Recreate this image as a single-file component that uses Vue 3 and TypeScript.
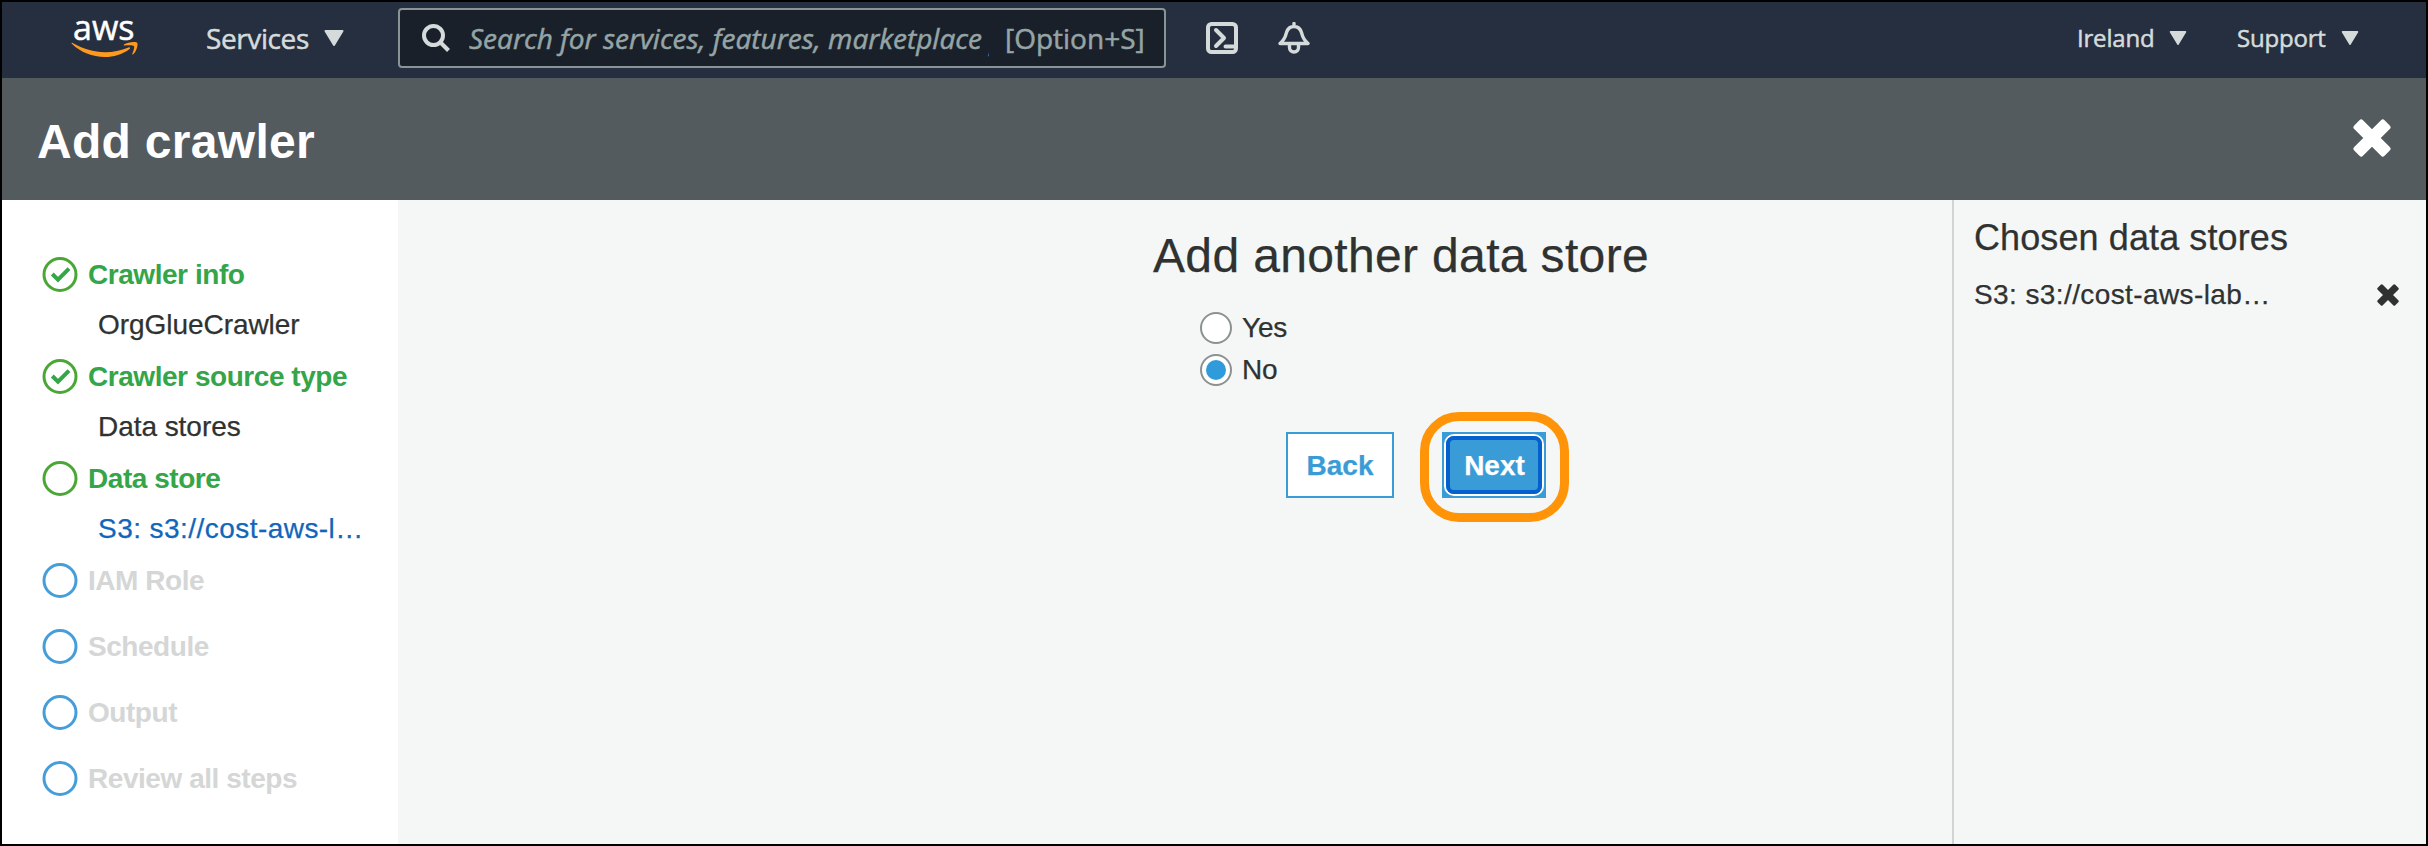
<script setup lang="ts">
import { ref } from 'vue'

interface Step {
  title: string
  state: 'done' | 'current' | 'todo'
  detail?: string
  link?: boolean
}

const steps: Step[] = [
  { title: 'Crawler info', state: 'done', detail: 'OrgGlueCrawler' },
  { title: 'Crawler source type', state: 'done', detail: 'Data stores' },
  { title: 'Data store', state: 'current', detail: 'S3: s3://cost-aws-l…', link: true },
  { title: 'IAM Role', state: 'todo' },
  { title: 'Schedule', state: 'todo' },
  { title: 'Output', state: 'todo' },
  { title: 'Review all steps', state: 'todo' },
]

const crossPath =
  'M19 13.800L29.800 3 35 8.200 24.200 19 35 29.800 29.800 35 19 24.200 8.200 35 3 29.800 13.800 19 3 8.200 8.200 3z'

const options = ['Yes', 'No']
const answer = ref('No')
</script>

<template>
  <div class="window">
    <nav class="nav">
      <div class="logo">
        <span class="logo-text">aws</span>
        <svg class="smile" width="68" height="18" viewBox="0 0 68 18">
          <path fill="#ff9a1f" d="M.6 1.6C.2 1 1 .6 1.6 1 12 7 23 10.200 34 10.200 42 10.200 50 8.600 57.500 5.400 58.800 4.900 59.800 6.200 58.600 7 51.500 12.500 42.500 15 34 15 21.500 15 9.500 10.500.6 1.600z" />
          <path fill="#ff9a1f" d="M53 2.500C56.500.1 65 -.8 66.200.8 67.300 2.400 65.800 9.200 62.200 12.300 61.600 12.800 61 12.500 61.300 11.800 62.200 9.800 63.800 5.200 63 4.200 62 3 57 3.300 53.700 3.600 52.700 3.700 52.500 2.900 53 2.500z" />
        </svg>
      </div>
      <div class="menu services">
        <span>Services</span>
        <svg width="20" height="16" viewBox="0 0 20 16"><path d="M1.500 1h17L10 15z" /></svg>
      </div>
      <div class="search">
        <svg class="lens" width="28" height="28" viewBox="0 0 28 28">
          <circle cx="11.500" cy="11.500" r="9.500" />
          <path d="M18.500 18.500l8 8" />
        </svg>
        <span class="placeholder">Search for services, features, marketplace p</span>
        <span class="shortcut">[Option+S]</span>
      </div>
      <svg class="nav-icon shell" width="32" height="32" viewBox="0 0 32 32">
        <rect x="2" y="2" width="28" height="28" rx="3.500" />
        <path d="M10 8l8 8-8 8M19.500 24.500h10" />
      </svg>
      <svg class="nav-icon bell" width="32" height="32" viewBox="0 0 32 32">
        <path d="M16 1.500v2M2 21.500C7 17.500 7.500 14.500 8.500 10.500 9.700 6.500 12.500 4.500 16 4.500s6.300 2 7.500 6c1 4 1.500 7 6.500 11zM11.500 22v3.500c0 2.700 2 4.500 4.500 4.500s4.500-1.800 4.500-4.500V22" />
      </svg>
      <div class="menu region">
        <span>Ireland</span>
        <svg width="18" height="14" viewBox="0 0 20 16"><path d="M1.500 1h17L10 15z" /></svg>
      </div>
      <div class="menu support">
        <span>Support</span>
        <svg width="18" height="14" viewBox="0 0 20 16"><path d="M1.500 1h17L10 15z" /></svg>
      </div>
    </nav>

    <header class="titlebar">
      <h1>Add crawler</h1>
      <svg class="cross" width="38" height="38" viewBox="0 0 38 38">
        <path :d="crossPath" />
      </svg>
    </header>

    <div class="body">
      <aside class="steps">
        <div v-for="step in steps" :key="step.title" class="step" :class="step.state">
          <div class="step-title">
            <svg width="36" height="36" viewBox="0 0 36 36">
              <circle cx="18" cy="18.500" r="16" />
              <path v-if="step.state === 'done'" d="M10.300 18l5.700 5.700L27 12.700" />
            </svg>
            <span>{{ step.title }}</span>
          </div>
          <div v-if="step.detail" class="detail" :class="{ link: step.link }">{{ step.detail }}</div>
        </div>
      </aside>

      <main class="main">
        <h2>Add another data store</h2>
        <div class="options">
          <label v-for="option in options" :key="option" @click="answer = option">
            <span class="radio"><i v-if="answer === option"></i></span>
            <span>{{ option }}</span>
          </label>
        </div>
        <div class="actions">
          <button class="back">Back</button>
          <div class="highlight">
            <button class="next"><span>Next</span></button>
          </div>
        </div>
      </main>

      <aside class="chosen">
        <h3>Chosen data stores</h3>
        <div class="store">
          <span>S3: s3://cost-aws-lab…</span>
          <svg class="cross" width="22" height="22" viewBox="0 0 38 38">
            <path :d="crossPath" />
          </svg>
        </div>
      </aside>
    </div>
  </div>
</template>

<style>
body {
  margin: 0;
  overflow: hidden;
}
</style>

<style scoped>
.window {
  box-sizing: border-box;
  width: 2428px;
  height: 846px;
  border: 2px solid #000;
  display: flex;
  flex-direction: column;
  font-family: "Liberation Sans", Arial, sans-serif;
  font-size: 28px;
  color: #2f3231;
  background: #f4f7f6;
}

.nav {
  flex: none;
  display: flex;
  align-items: flex-start;
  height: 76px;
  background: #252f3f;
  font-family: "Open Sans", "Noto Sans", sans-serif;
  font-weight: 500;
  color: #d5dbdb;
  -webkit-text-stroke: 0.5px currentColor;
}

.logo {
  width: 68px;
  margin-left: 69px;
}

.logo-text {
  display: block;
  height: 40px;
  margin-left: 2px;
  font-size: 34px;
  line-height: 51px;
  color: #fff;
}

.smile {
  display: block;
}

.menu {
  display: flex;
  align-items: center;
  height: 71px;
  white-space: nowrap;
}

.menu svg {
  fill: #d5dbdb;
  stroke: #d5dbdb;
  stroke-width: 2;
  stroke-linejoin: round;
}

.services {
  width: 138px;
  margin-left: 67px;
  justify-content: space-between;
  letter-spacing: -0.4px;
}

.search {
  box-sizing: border-box;
  display: flex;
  align-items: center;
  width: 768px;
  height: 60px;
  margin: 6px 0 0 54px;
  padding-left: 22px;
  border: 2px solid #879596;
  border-radius: 4px;
  background: #1a202a;
  color: #95a5a6;
}

.lens {
  flex: none;
  fill: none;
  stroke: #d5dbdb;
  stroke-width: 4;
}

.placeholder {
  width: 520px;
  margin-left: 19px;
  overflow: hidden;
  white-space: nowrap;
  font-style: italic;
  line-height: 44px;
}

.shortcut {
  margin-left: 16px;
}

.nav-icon {
  margin-top: 20px;
  fill: none;
  stroke: #d5dbdb;
  stroke-width: 4;
  stroke-linecap: round;
  stroke-linejoin: round;
}

.shell {
  margin-left: 40px;
}

.bell {
  margin-left: 40px;
  stroke-width: 3.4;
}

.region,
.support {
  font-size: 24px;
  justify-content: space-between;
  letter-spacing: -0.2px;
}

.region {
  width: 110px;
  margin-left: auto;
}

.support {
  width: 122px;
  margin: 0 67px 0 50px;
}

.titlebar {
  flex: none;
  display: flex;
  align-items: center;
  justify-content: space-between;
  box-sizing: border-box;
  height: 122px;
  padding: 0 35px;
  background: #545b5e;
  color: #fff;
}

h1,
h2,
h3 {
  margin: 0;
}

h1 {
  padding-top: 4px;
  font-size: 48px;
  letter-spacing: 0.3px;
}

.cross {
  flex: none;
  fill: currentColor;
  stroke: currentColor;
  stroke-width: 5;
  stroke-linejoin: round;
}

.titlebar .cross {
  margin-bottom: 2px;
}

.body {
  flex: 1;
  display: flex;
  -webkit-text-stroke: 0.25px currentColor;
}

.steps {
  box-sizing: border-box;
  width: 396px;
  padding: 48px 0 0 40px;
  background: #fff;
}

.step-title {
  display: flex;
  align-items: center;
  gap: 10px;
  height: 52px;
  font-weight: 700;
  letter-spacing: -0.45px;
  color: #34a548;
  -webkit-text-stroke: 0;
}

.step-title span {
  padding-top: 2px;
}

.step-title svg {
  fill: none;
  stroke: #4aa736;
  stroke-width: 3;
}

.step-title path {
  stroke: #34a548;
  stroke-width: 4;
}

.todo .step-title {
  margin-bottom: 14px;
  color: #d5d6d6;
}

.todo .step-title svg {
  stroke: #459ed9;
}

.detail {
  height: 50px;
  padding-left: 56px;
  line-height: 49px;
  letter-spacing: -0.05px;
}

.link {
  letter-spacing: 0.45px;
  color: #1166bb;
}

.main {
  flex: 1;
  display: flex;
  flex-direction: column;
  align-items: flex-start;
}

h2 {
  margin: 28px 0 0 755px;
  font-size: 48px;
  font-weight: 400;
  line-height: 55px;
  letter-spacing: 0.35px;
}

.options {
  margin: 24px 0 0 802px;
}

.options label {
  display: flex;
  align-items: center;
  gap: 10px;
  height: 42px;
  letter-spacing: -0.2px;
}

.radio {
  box-sizing: border-box;
  display: flex;
  align-items: center;
  justify-content: center;
  width: 32px;
  height: 32px;
  border: 2px solid #8c9192;
  border-radius: 50%;
  background: #fff;
}

.radio i {
  width: 20px;
  height: 20px;
  border-radius: 50%;
  background: #2f9bda;
}

.actions {
  display: flex;
  align-items: flex-start;
  gap: 26px;
  margin: 21px 0 0 888px;
}

button {
  box-sizing: border-box;
  height: 66px;
  padding: 0;
  border: 2px solid #3a9cd6;
  font: 700 28px "Liberation Sans", Arial, sans-serif;
}

.back {
  width: 108px;
  margin-top: 20px;
  padding-top: 2px;
  background: #fff;
  color: #3a9cd6;
}

.highlight {
  box-sizing: border-box;
  width: 149px;
  height: 110px;
  padding: 11px 0 0 13px;
  border: 9px solid #ff9408;
  border-radius: 39px;
}

.next {
  display: flex;
  width: 104px;
  background: #3a9cd6;
  color: #fff;
}

.next span {
  box-sizing: border-box;
  display: flex;
  align-items: center;
  justify-content: center;
  width: 96px;
  height: 58px;
  margin: 2px;
  padding: 2px 0 0 1px;
  border: 4px solid #0560ce;
  border-radius: 8px;
  box-shadow: 0 0 0 2px #fff;
}

.chosen {
  box-sizing: border-box;
  width: 474px;
  padding: 17px 27px 0 20px;
  border-left: 2px solid #d0d4d4;
}

h3 {
  font-size: 36px;
  font-weight: 400;
  line-height: 42px;
  letter-spacing: 0.1px;
}

.store {
  display: flex;
  align-items: center;
  justify-content: space-between;
  height: 32px;
  margin-top: 20px;
  letter-spacing: 0.4px;
}
</style>
